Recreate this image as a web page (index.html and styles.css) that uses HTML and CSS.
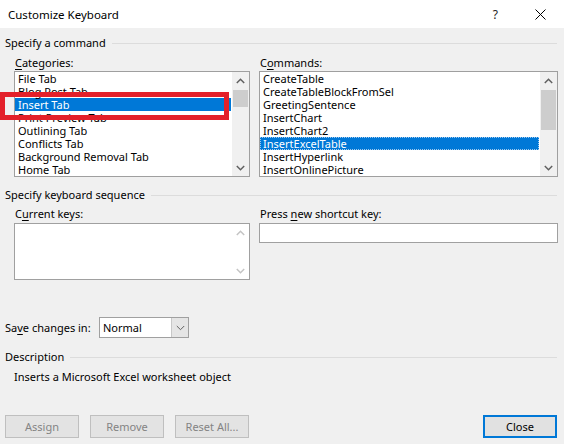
FILE: index.html
```html
<!DOCTYPE html>
<html>
<head>
<meta charset="utf-8">
<link rel="stylesheet" href="styles.css">
</head>
<body>
<div class="dialog">
  <div class="titlebar">
    <span class="title">Customize Keyboard</span>
    <span class="help">?</span>
    <svg class="close-x" width="11" height="11" viewBox="0 0 11 11"><path d="M0.5 0.5 L10.5 10.5 M10.5 0.5 L0.5 10.5" stroke="#000" stroke-width="1"/></svg>
  </div>
  <div class="content">
    <div class="group-head first"><span>Specify a command</span><div class="rule"></div></div>
    <div class="cols">
      <div class="col">
        <div class="label"><u>C</u>ategories:</div>
        <div class="listbox">
          <div class="items">
            <div class="item">File Tab</div>
            <div class="item">Blog Post Tab</div>
            <div class="item sel">Insert Tab</div>
            <div class="item">Print Preview Tab</div>
            <div class="item">Outlining Tab</div>
            <div class="item">Conflicts Tab</div>
            <div class="item">Background Removal Tab</div>
            <div class="item">Home Tab</div>
          </div>
          <div class="vscroll">
            <div class="arrow"><svg width="9" height="6" viewBox="0 0 9 6"><polyline points="0.8,5 4.5,1.3 8.2,5" fill="none" stroke="#606060" stroke-width="1.5"/></svg></div>
            <div class="track"><div class="thumb t1"></div></div>
            <div class="arrow"><svg width="9" height="6" viewBox="0 0 9 6"><polyline points="0.8,1 4.5,4.7 8.2,1" fill="none" stroke="#606060" stroke-width="1.5"/></svg></div>
          </div>
          <div class="redbox"></div>
        </div>
      </div>
      <div class="col">
        <div class="label">C<u>o</u>mmands:</div>
        <div class="listbox">
          <div class="items">
            <div class="item">CreateTable</div>
            <div class="item">CreateTableBlockFromSel</div>
            <div class="item">GreetingSentence</div>
            <div class="item">InsertChart</div>
            <div class="item">InsertChart2</div>
            <div class="item sel focus">InsertExcelTable</div>
            <div class="item">InsertHyperlink</div>
            <div class="item">InsertOnlinePicture</div>
          </div>
          <div class="vscroll">
            <div class="arrow"><svg width="9" height="6" viewBox="0 0 9 6"><polyline points="0.8,5 4.5,1.3 8.2,5" fill="none" stroke="#606060" stroke-width="1.5"/></svg></div>
            <div class="track"><div class="thumb t2"></div></div>
            <div class="arrow"><svg width="9" height="6" viewBox="0 0 9 6"><polyline points="0.8,1 4.5,4.7 8.2,1" fill="none" stroke="#606060" stroke-width="1.5"/></svg></div>
          </div>
        </div>
      </div>
    </div>

    <div class="group-head second"><span>Specify keyboard sequence</span><div class="rule"></div></div>
    <div class="cols keys">
      <div class="col">
        <div class="label">C<u>u</u>rrent keys:</div>
        <div class="keybox">
          <div class="vscroll dis">
            <div class="arrow"><svg width="9" height="6" viewBox="0 0 9 6"><polyline points="0.8,5 4.5,1.3 8.2,5" fill="none" stroke="#c4c4c4" stroke-width="1.5"/></svg></div>
            <div class="track"></div>
            <div class="arrow"><svg width="9" height="6" viewBox="0 0 9 6"><polyline points="0.8,1 4.5,4.7 8.2,1" fill="none" stroke="#c4c4c4" stroke-width="1.5"/></svg></div>
          </div>
        </div>
      </div>
      <div class="col">
        <div class="label">Press <u>n</u>ew shortcut key:</div>
        <div class="textbox"></div>
      </div>
    </div>

    <div class="save-row">
      <span>Sa<u>v</u>e changes in:</span>
      <div class="select">
        <span class="sel-text">Normal</span>
        <div class="dd"><svg width="9" height="6" viewBox="0 0 9 6"><polyline points="0.8,1 4.5,4.7 8.2,1" fill="none" stroke="#606060" stroke-width="1"/></svg></div>
      </div>
    </div>

    <div class="group-head third"><span>Description</span><div class="rule"></div></div>
    <div class="desc">Inserts a Microsoft Excel worksheet object</div>

    <div class="buttons">
      <div class="btn disabled">Assign</div>
      <div class="btn disabled">Remove</div>
      <div class="btn disabled">Reset All...</div>
      <div class="spacer"></div>
      <div class="btn default">Close</div>
    </div>
  </div>
</div>
</body>
</html>
```

FILE: styles.css
```css
html, body {
  margin: 0;
  padding: 0;
}
body {
  width: 564px;
  height: 444px;
  overflow: hidden;
  background: #f0f0f0;
  font-family: "Noto Sans", "Open Sans", sans-serif;
  font-size: 11px;
  color: #000;
}
u { text-decoration: underline; text-underline-offset: 2px; }
.dialog {
  width: 564px;
  height: 444px;
  display: flex;
  flex-direction: column;
}
.titlebar {
  height: 28px;
  background: #fff;
  display: flex;
  align-items: center;
  padding-left: 8px;
  box-sizing: border-box;
}
.title {
  flex: 1;
  font-size: 11.5px;
  line-height: 15px;
}
.help {
  font-size: 12px;
  margin-right: 37px;
  color: #222;
}
.close-x {
  margin-right: 18px;
}
.content {
  padding: 0 7px 0 5px;
  flex: 1;
  display: flex;
  flex-direction: column;
}
.group-head {
  display: flex;
  align-items: center;
  height: 15px;
  line-height: 15px;
}
.group-head .rule {
  flex: 1;
  height: 1px;
  background: #dcdcdc;
  margin-left: 6px;
  margin-top: 1px;
}
.group-head.first { margin-top: 7px; }
.group-head.second { margin-top: 10px; }
.group-head.third { margin-top: 11px; }
.cols {
  display: grid;
  grid-template-columns: 236px 299px;
  column-gap: 9px;
  padding-left: 9px;
  margin-top: 5px;
}
.cols.keys { margin-top: 4px; }
.label {
  line-height: 15px;
  height: 15px;
  padding-left: 1px;
  margin-bottom: 1px;
}
.keys .label { margin-bottom: 2px; }
.listbox {
  position: relative;
  height: 106px;
  box-sizing: border-box;
  border: 1px solid #9f9f9f;
  background: #fff;
  display: flex;
}
.items {
  flex: 1;
  min-width: 0;
}
.item {
  height: 13px;
  line-height: 13px;
  padding-left: 3px;
  white-space: nowrap;
}
.item.sel {
  background: #0078d7;
  color: #fff;
}
.item.focus {
  outline: 1px dotted #9ec9ef;
  outline-offset: -1px;
}
.vscroll {
  width: 17px;
  background: #f0f0f0;
  display: flex;
  flex-direction: column;
  margin-left: 1px;
}
.arrow {
  height: 17px;
  display: flex;
  align-items: center;
  justify-content: center;
}
.track {
  flex: 1;
  position: relative;
}
.thumb {
  background: #cdcdcd;
  margin: 0 1px;
}
.thumb.t1 { height: 17px; margin-top: 1px; }
.thumb.t2 { height: 40px; margin-top: 1px; }
.redbox {
  position: absolute;
  left: -15px;
  top: 20px;
  width: 229px;
  height: 28px;
  box-sizing: border-box;
  border: 5px solid #e3202a;
}
.keybox {
  height: 57px;
  box-sizing: border-box;
  border: 1px solid #a0a0a0;
  background: #fff;
  display: flex;
  justify-content: flex-end;
}
.keybox .vscroll { background: #fff; }
.textbox {
  height: 20px;
  box-sizing: border-box;
  border: 1px solid #a0a0a0;
  background: #fff;
}
.save-row {
  display: flex;
  align-items: center;
  margin-top: 37px;
  height: 21px;
}
.save-row > span {
  width: 94px;
  line-height: 15px;
}
.select {
  width: 90px;
  height: 21px;
  box-sizing: border-box;
  border: 1px solid #a0a0a0;
  background: #fff;
  display: flex;
  align-items: center;
}
.sel-text {
  flex: 1;
  padding-left: 3px;
}
.dd {
  width: 16px;
  height: 19px;
  background: #e5e5e5;
  border-left: 1px solid #c8c8c8;
  display: flex;
  align-items: center;
  justify-content: center;
}
.desc {
  margin-top: 5px;
  padding-left: 9px;
  line-height: 15px;
}
.buttons {
  display: flex;
  margin-top: 31px;
  gap: 11px;
}
.spacer { flex: 1; }
.btn {
  width: 74px;
  height: 23px;
  box-sizing: border-box;
  display: flex;
  align-items: center;
  justify-content: center;
  line-height: 15px;
}
.btn.disabled {
  background: #e3e3e3;
  border: 1px solid #bfbfbf;
  color: #838383;
}
.btn.default {
  background: #e1e1e1;
  border: 2px solid #0078d7;
  color: #000;
}
```
